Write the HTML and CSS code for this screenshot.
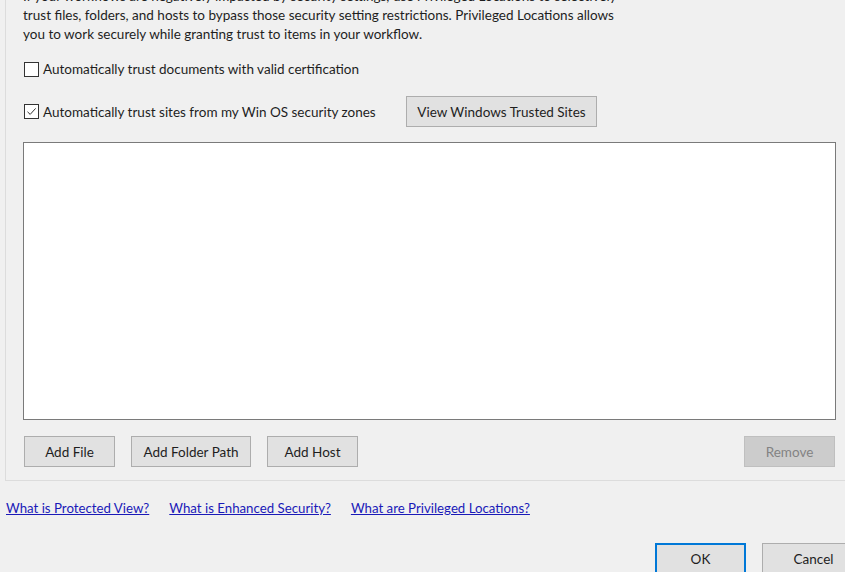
FILE: index.html
```html
<!DOCTYPE html>
<html lang="en">
<head>
<meta charset="utf-8">
<title>Enhanced Security</title>
<link rel="stylesheet" href="styles.css">
</head>
<body>
<div class="dialog">
  <section class="group">
    <p class="intro">If your workflows are negatively impacted by security settings, use Privileged Locations to selectively trust files, folders, and hosts to bypass those security setting restrictions. Privileged Locations allows you to work securely while granting trust to items in your workflow.</p>

    <label class="check-row row-cert">
      <span class="box"></span>
      <span>Automatically trust documents with valid certification</span>
    </label>

    <div class="check-row row-zones">
      <label class="check-label">
        <span class="box">
          <svg viewBox="0 0 13 13" width="13" height="13"><path d="M2.5 6.8 L5.2 9.4 L10.6 3.4" fill="none" stroke="#333" stroke-width="1"/></svg>
        </span>
        <span>Automatically trust sites from my Win OS security zones</span>
      </label>
      <button class="btn btn-sites">View Windows Trusted Sites</button>
    </div>

    <div class="list"></div>

    <div class="actions">
      <button class="btn btn-file">Add File</button>
      <button class="btn btn-folder">Add Folder Path</button>
      <button class="btn btn-host">Add Host</button>
      <button class="btn btn-remove" disabled>Remove</button>
    </div>
  </section>

  <nav class="links">
    <a href="#">What is Protected View?</a>
    <a href="#">What is Enhanced Security?</a>
    <a href="#">What are Privileged Locations?</a>
  </nav>

  <div class="footer">
    <button class="btn btn-ok">OK</button>
    <button class="btn btn-cancel">Cancel</button>
  </div>
</div>
</body>
</html>
```

FILE: styles.css
```css
html, body {
  margin: 0;
  padding: 0;
  background: #f0f0f0;
  overflow: hidden;
}

body {
  width: 845px;
  height: 572px;
  font-family: Lato, "Open Sans", sans-serif;
  font-size: 13.5px;
  color: #1e1e1e;
}

.dialog {
  display: flex;
  flex-direction: column;
}

.group {
  margin: -13px 0 0 5px;
  padding: 0 9px 13px 17px;
  border-left: 1px solid #dcdcdc;
  border-bottom: 1px solid #dcdcdc;
  display: flex;
  flex-direction: column;
}

.intro {
  margin: 0;
  line-height: 19px;
  width: 610px;
}

.check-row {
  display: flex;
  align-items: center;
  gap: 4px;
}

.row-cert {
  margin-top: 15px;
  height: 20px;
}

.row-zones {
  margin-top: 17px;
  height: 31px;
  gap: 0;
}

.check-label {
  display: flex;
  align-items: center;
  gap: 4px;
  width: 383px;
}

.box {
  width: 13px;
  height: 13px;
  border: 1px solid #333;
  background: #fff;
  margin-left: 1px;
  display: flex;
  flex: none;
}

.btn {
  font-family: inherit;
  font-size: 13.5px;
  color: #1e1e1e;
  background: #e1e1e1;
  border: 1px solid #adadad;
  height: 31px;
  padding: 0;
  margin: 0;
}

.btn-sites {
  width: 191px;
}

.list {
  margin-top: 15px;
  height: 276px;
  background: #fff;
  border: 1px solid #7a7a7a;
}

.actions {
  margin-top: 16px;
  display: flex;
  gap: 16px;
  padding-left: 1px;
}

.btn-file { width: 91px; }
.btn-folder { width: 120px; }
.btn-host { width: 91px; }

.btn-remove {
  width: 91px;
  margin-left: auto;
  margin-right: 1px;
  background: #cccccc;
  border-color: #bfbfbf;
  color: #838383;
}

.links {
  display: flex;
  gap: 20px;
  padding: 17px 0 0 6px;
  height: 20px;
  line-height: 20px;
  font-size: 13.25px;
}

.links a {
  color: #1a1ab8;
  text-decoration: underline;
}

.footer {
  margin-top: 25px;
  display: flex;
  justify-content: flex-end;
  gap: 16px;
  margin-right: -20px;
}

.btn-ok {
  width: 91px;
  border: 2px solid #0078d7;
}

.btn-cancel {
  width: 103px;
}
```
